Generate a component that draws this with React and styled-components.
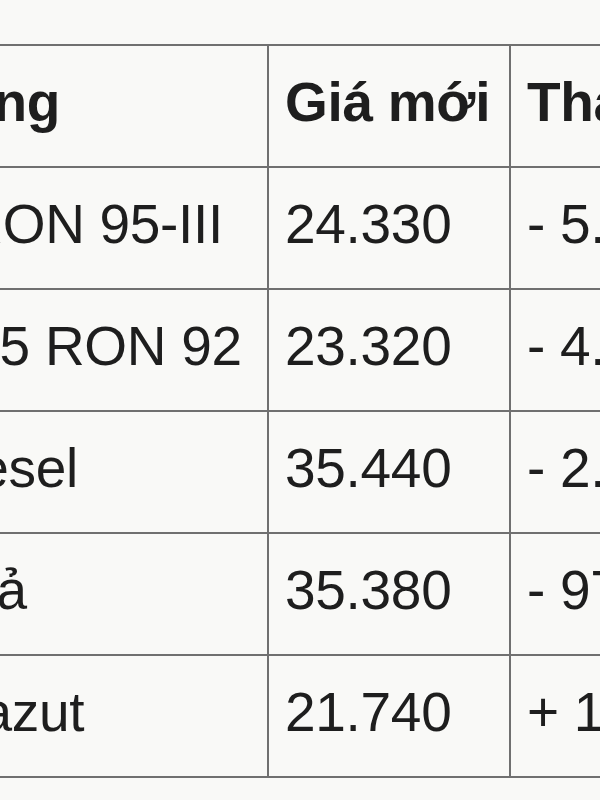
import React from 'react';
import styled, { createGlobalStyle } from 'styled-components';

const GlobalStyle = createGlobalStyle`
  html, body {
    margin: 0;
    padding: 0;
    background: #f9f9f7;
    overflow: hidden;
  }
  body {
    font-family: "Liberation Sans", Arial, sans-serif;
    color: #1e1e1e;
  }
`;

const Page = styled.div`
  width: 600px;
  height: 800px;
  overflow: hidden;
  padding-top: 44px;
  box-sizing: border-box;
`;

const Table = styled.table`
  border-collapse: collapse;
  table-layout: fixed;
  width: 1006px;
  margin-left: -197px;
  border: 2px solid #707070;
`;

const Cell = styled.td`
  border: 2px solid #707070;
  height: 112px;
  padding: 0 16px 8px;
  font-size: 55px;
  font-weight: ${({ head }) => (head ? 700 : 400)};
  white-space: nowrap;
  overflow: hidden;
  vertical-align: middle;
  text-align: left;
  letter-spacing: -0.3px;
`;

const rows = [
  ['Xăng RON 95-III', '24.330', '- 5.070'],
  ['Xăng E5 RON 92', '23.320', '- 4.990'],
  ['Dầu diesel', '35.440', '- 2.000'],
  ['Dầu hoả', '35.380', '- 970'],
  ['Dầu mazut', '21.740', '+ 1.040'],
];

export default function App() {
  return (
    <Page>
      <GlobalStyle />
      <Table>
        <colgroup>
          <col style={{ width: 464 }} />
          <col style={{ width: 242 }} />
          <col style={{ width: 300 }} />
        </colgroup>
        <thead>
          <tr>
            <Cell as="th" head>Mặt hàng</Cell>
            <Cell as="th" head>Giá mới</Cell>
            <Cell as="th" head>Thay đổi</Cell>
          </tr>
        </thead>
        <tbody>
          {rows.map((r) => (
            <tr key={r[0]}>
              <Cell>{r[0]}</Cell>
              <Cell>{r[1]}</Cell>
              <Cell>{r[2]}</Cell>
            </tr>
          ))}
        </tbody>
      </Table>
    </Page>
  );
}
